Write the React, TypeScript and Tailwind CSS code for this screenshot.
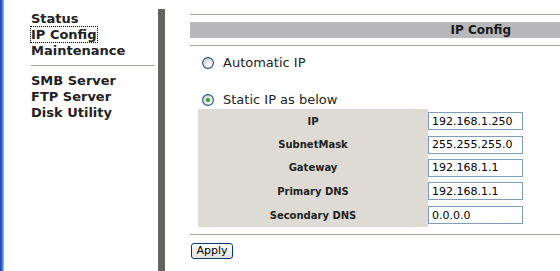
import React from 'react';

const menuTop = ['Status', 'IP Config', 'Maintenance'];
const menuBottom = ['SMB Server', 'FTP Server', 'Disk Utility'];

const fields = [
  { label: 'IP', value: '192.168.1.250', h: 'h-[24px]' },
  { label: 'SubnetMask', value: '255.255.255.0', h: 'h-[23px]' },
  { label: 'Gateway', value: '192.168.1.1', h: 'h-[23px]' },
  { label: 'Primary DNS', value: '192.168.1.1', h: 'h-[24px]' },
  { label: 'Secondary DNS', value: '0.0.0.0', h: 'h-[24px]' },
];

const Radio: React.FC<{ checked?: boolean }> = ({ checked }) => (
  <svg width="12" height="12" viewBox="0 0 12 12" className="shrink-0">
    <defs>
      <radialGradient id={checked ? 'rg1' : 'rg0'} cx="0.65" cy="0.7" r="0.7">
        <stop offset="0" stopColor="#ffffff" />
        <stop offset="1" stopColor="#d4d4ce" />
      </radialGradient>
    </defs>
    <circle cx="6" cy="6" r="5.4" fill={`url(#${checked ? 'rg1' : 'rg0'})`} stroke="#1f5383" strokeWidth="1.1" />
    {checked && <circle cx="6" cy="6" r="2.1" fill="#2aa12a" />}
  </svg>
);

const MenuItem: React.FC<{ label: string }> = ({ label }) => (
  <div className="h-[16px] leading-[16px]">
    {label === 'IP Config' ? (
      <span className="outline-1 outline-dotted outline-black">{label}</span>
    ) : (
      label
    )}
  </div>
);

export default function App() {
  return (
    <div className="flex h-[271px] w-[560px] overflow-hidden bg-white text-[#222] font-['DejaVu_Sans',Verdana,sans-serif]">
      {/* window edge */}
      <div className="w-[4px] shrink-0 bg-linear-to-r from-[#1a3c9c] via-[#2f6cee] to-[#a9c4f4]" />

      {/* side menu */}
      <div className="w-[154px] shrink-0 pl-[27px] pr-[3px] pt-[11px] text-[13px] font-bold">
        {menuTop.map(m => <MenuItem key={m} label={m} />)}
        <div className="mt-[6px] mb-[7px] h-px bg-[#aca899]" />
        {menuBottom.map(m => <MenuItem key={m} label={m} />)}
      </div>

      {/* divider bar */}
      <div className="mt-[9px] w-[7px] shrink-0 bg-[#646461]" />

      {/* content */}
      <div className="flex-1 pl-[25px] pt-[14px]">
        <div className="h-px bg-[#aca899]" />
        <div className="mt-[7px] flex h-[16px] items-center justify-end bg-[#b8b7ba] pr-[49px] text-[12px] font-bold text-[#1a1a1a]">
          IP Config
        </div>
        <div className="mt-[7px] h-px bg-[#aca899]" />

        <div className="mt-[7px] flex h-[20px] items-center gap-[9px] pl-[12px] text-[13px]">
          <Radio />
          <span>Automatic IP</span>
        </div>
        <div className="mt-[18px] flex h-[18px] items-center gap-[9px] pl-[12px] text-[13px]">
          <Radio checked />
          <span>Static IP as below</span>
        </div>

        <div className="ml-[8px] grid w-[325px] grid-cols-[230px_95px]">
          {fields.map(f => (
            <React.Fragment key={f.label}>
              <div className={`${f.h} flex items-center justify-center bg-[#dddbd3] text-[10px] font-bold`}>
                {f.label}
              </div>
              <div className={`${f.h} flex items-center`}>
                <input
                  readOnly
                  value={f.value}
                  className="h-[18px] w-[95px] border border-[#7f9db9] bg-white pl-[3px] text-[11px] text-black outline-none"
                />
              </div>
            </React.Fragment>
          ))}
        </div>

        <div className="mt-[7px] h-px bg-[#aca899]" />
        <button className="mt-[8px] ml-px flex h-[16px] w-[42px] items-center justify-center rounded-[3px] border border-[#003c74] bg-linear-to-b from-white to-[#e3e2da] text-[11px] text-black">
          Apply
        </button>
      </div>
    </div>
  );
}
